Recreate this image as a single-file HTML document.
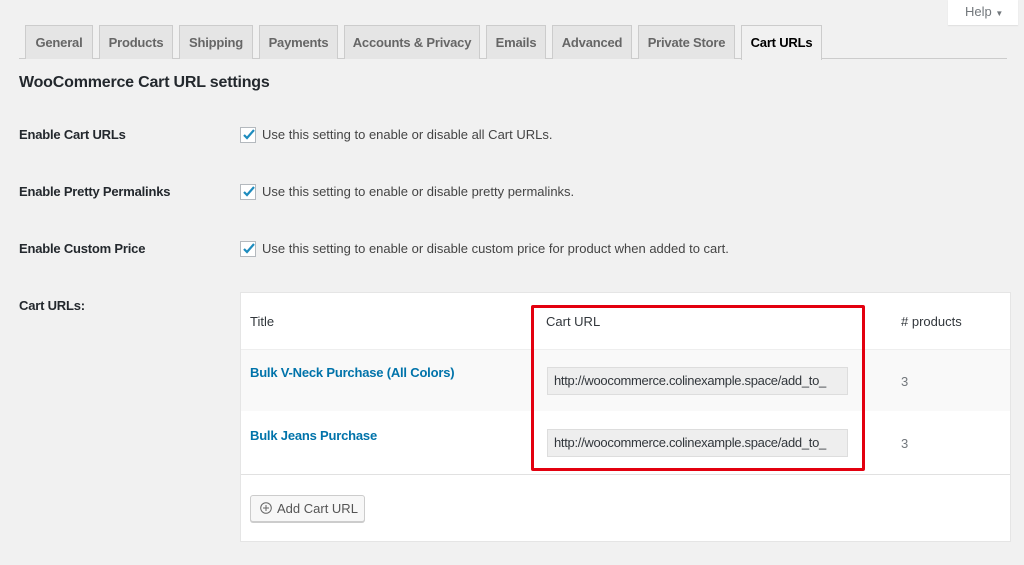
<!DOCTYPE html>
<html><head><style>
*{margin:0;padding:0;box-sizing:border-box}
body{width:1024px;height:565px;background:#f1f1f1;font-family:"Liberation Sans",sans-serif;color:#23282d;position:relative;overflow:hidden;font-size:13px}
.a{position:absolute;white-space:nowrap}
.tab{position:absolute;top:25px;height:34px;background:#e5e5e5;border:1px solid #ccc;border-bottom:none;font-size:13px;font-weight:bold;color:#666;text-align:center;line-height:33px;letter-spacing:-0.2px}
.tab.act{background:#f1f1f1;color:#000;height:35px}
.lbl{font-weight:bold;font-size:13px;letter-spacing:-0.2px;color:#23282d}
.cb{position:absolute;width:16px;height:16px;border:1px solid #b4b9be;background:#fff;left:240px}
.cb svg{position:absolute;left:0;top:-1px}
.inp{position:absolute;left:547px;width:301px;height:28px;background:#eee;border:1px solid #ddd;font-size:13px;color:#32373c;line-height:26px;padding-left:6px;letter-spacing:-0.3px}
.link{color:#0073aa;font-weight:bold;font-size:13px;letter-spacing:-0.2px}
</style></head><body>
<div class="a" style="left:948px;top:0;width:70px;height:25px;background:#fff;box-shadow:0 1px 1px rgba(0,0,0,.08);color:#72777c;font-size:13px;line-height:23px;padding-left:17px">Help <span style="font-size:8px">▼</span></div>
<div class="a" style="left:19px;top:58px;width:988px;height:1px;background:#ccc"></div>
<div class="tab" style="left:25px;width:68px">General</div>
<div class="tab" style="left:99px;width:74px">Products</div>
<div class="tab" style="left:179px;width:74px">Shipping</div>
<div class="tab" style="left:259px;width:79px">Payments</div>
<div class="tab" style="left:344px;width:136px">Accounts &amp; Privacy</div>
<div class="tab" style="left:486px;width:60px">Emails</div>
<div class="tab" style="left:552px;width:80px">Advanced</div>
<div class="tab" style="left:638px;width:97px">Private Store</div>
<div class="tab act" style="left:741px;width:81px">Cart URLs</div>

<div class="a" style="left:19px;top:74px;font-size:16px;font-weight:bold;letter-spacing:-0.2px;color:#23282d">WooCommerce Cart URL settings</div>

<div class="a lbl" style="left:19px;top:127px">Enable Cart URLs</div>
<div class="cb" style="top:127px"><svg width="16" height="16" viewBox="0 0 16 16"><path d="M3 8l3 3 7-8" stroke="#1e8cbe" stroke-width="2.2" fill="none"/></svg></div>
<div class="a" style="left:262px;top:127px;color:#444">Use this setting to enable or disable all Cart URLs.</div>

<div class="a lbl" style="left:19px;top:184px">Enable Pretty Permalinks</div>
<div class="cb" style="top:184px"><svg width="16" height="16" viewBox="0 0 16 16"><path d="M3 8l3 3 7-8" stroke="#1e8cbe" stroke-width="2.2" fill="none"/></svg></div>
<div class="a" style="left:262px;top:184px;color:#444">Use this setting to enable or disable pretty permalinks.</div>

<div class="a lbl" style="left:19px;top:241px">Enable Custom Price</div>
<div class="cb" style="top:241px"><svg width="16" height="16" viewBox="0 0 16 16"><path d="M3 8l3 3 7-8" stroke="#1e8cbe" stroke-width="2.2" fill="none"/></svg></div>
<div class="a" style="left:262px;top:241px;color:#444">Use this setting to enable or disable custom price for product when added to cart.</div>

<div class="a lbl" style="left:19px;top:298px">Cart URLs:</div>

<div class="a" style="left:240px;top:292px;width:771px;height:250px;background:#fff;border:1px solid #e5e5e5"></div>
<div class="a" style="left:241px;top:349px;width:769px;height:62px;background:#f9f9f9;border-top:1px solid #eee"></div>
<div class="a" style="left:241px;top:474px;width:769px;height:1px;background:#e1e1e1"></div>
<div class="a" style="left:250px;top:314px;color:#32373c">Title</div>
<div class="a" style="left:546px;top:314px;color:#32373c">Cart URL</div>
<div class="a" style="left:901px;top:314px;color:#32373c"># products</div>
<div class="a link" style="left:250px;top:365px">Bulk V-Neck Purchase (All Colors)</div>
<div class="a link" style="left:250px;top:428px">Bulk Jeans Purchase</div>
<div class="inp" style="top:367px">http://woocommerce.colinexample.space/add_to_</div>
<div class="inp" style="top:429px">http://woocommerce.colinexample.space/add_to_</div>
<div class="a" style="left:901px;top:374px;color:#72777c">3</div>
<div class="a" style="left:901px;top:436px;color:#72777c">3</div>
<div class="a" style="left:250px;top:495px;width:115px;height:27px;background:#f7f7f7;border:1px solid #ccc;border-radius:3px;box-shadow:0 1px 0 #ccc;font-size:13px;color:#555;line-height:25px;padding-left:9px"><svg width="12" height="12" viewBox="0 0 12 12" style="vertical-align:-1px;margin-right:5px"><circle cx="6" cy="6" r="5.3" fill="none" stroke="#666" stroke-width="1"/><path d="M6 3v6M3 6h6" stroke="#666" stroke-width="1"/></svg>Add Cart URL</div>

<div class="a" style="left:531px;top:305px;width:334px;height:166px;border:3px solid #e3000f;border-radius:2px"></div>
</body></html>
